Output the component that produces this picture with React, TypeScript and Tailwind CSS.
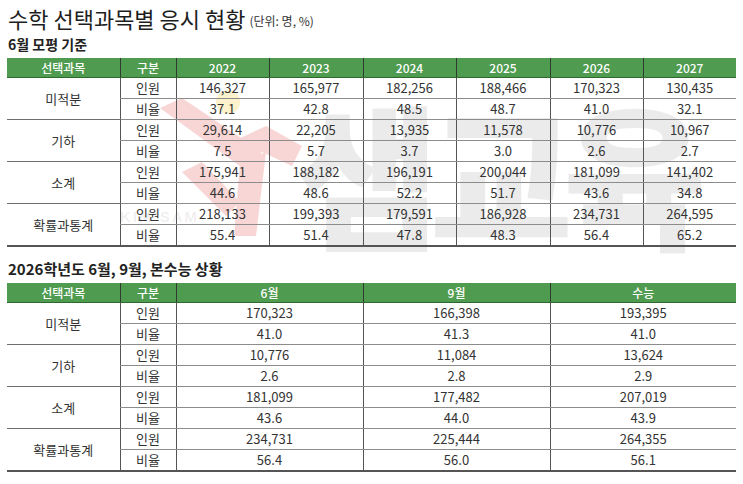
import React from "react";

type Group = { name: string; rows: { label: string; values: string[] }[] };

const t1Head = ["2022", "2023", "2024", "2025", "2026", "2027"];
const t1: Group[] = [
  { name: "미적분", rows: [
    { label: "인원", values: ["146,327", "165,977", "182,256", "188,466", "170,323", "130,435"] },
    { label: "비율", values: ["37.1", "42.8", "48.5", "48.7", "41.0", "32.1"] },
  ] },
  { name: "기하", rows: [
    { label: "인원", values: ["29,614", "22,205", "13,935", "11,578", "10,776", "10,967"] },
    { label: "비율", values: ["7.5", "5.7", "3.7", "3.0", "2.6", "2.7"] },
  ] },
  { name: "소계", rows: [
    { label: "인원", values: ["175,941", "188,182", "196,191", "200,044", "181,099", "141,402"] },
    { label: "비율", values: ["44.6", "48.6", "52.2", "51.7", "43.6", "34.8"] },
  ] },
  { name: "확률과통계", rows: [
    { label: "인원", values: ["218,133", "199,393", "179,591", "186,928", "234,731", "264,595"] },
    { label: "비율", values: ["55.4", "51.4", "47.8", "48.3", "56.4", "65.2"] },
  ] },
];

const t2Head = ["6월", "9월", "수능"];
const t2: Group[] = [
  { name: "미적분", rows: [
    { label: "인원", values: ["170,323", "166,398", "193,395"] },
    { label: "비율", values: ["41.0", "41.3", "41.0"] },
  ] },
  { name: "기하", rows: [
    { label: "인원", values: ["10,776", "11,084", "13,624"] },
    { label: "비율", values: ["2.6", "2.8", "2.9"] },
  ] },
  { name: "소계", rows: [
    { label: "인원", values: ["181,099", "177,482", "207,019"] },
    { label: "비율", values: ["43.6", "44.0", "43.9"] },
  ] },
  { name: "확률과통계", rows: [
    { label: "인원", values: ["234,731", "225,444", "264,355"] },
    { label: "비율", values: ["56.4", "56.0", "56.1"] },
  ] },
];

function DataTable({ head, groups, widths }: { head: string[]; groups: Group[]; widths: string[] }) {
  return (
    <table className="relative z-10 w-[729px] table-fixed border-collapse text-[13px] text-[#333]">
      <colgroup>
        <col className="w-[113px]" />
        <col className="w-[56px]" />
        {widths.map((w, i) => (
          <col key={i} style={{ width: w }} />
        ))}
      </colgroup>
      <thead>
        <tr className="h-[19px] bg-[#4f9b4f] text-white">
          <th className="border-b border-b-[#2e6a2e] p-0 text-[12px] font-medium leading-[19px]">선택과목</th>
          <th className="border-b border-l border-b-[#2e6a2e] border-l-[#2f3b2f] p-0 text-[12px] font-medium leading-[19px]">구분</th>
          {head.map((h) => (
            <th key={h} className="border-b border-l border-b-[#2e6a2e] border-l-[#2f3b2f] p-0 text-[12px] font-medium leading-[19px]">
              {h}
            </th>
          ))}
        </tr>
      </thead>
      <tbody>
        {groups.map((g, gi) =>
          g.rows.map((r, ri) => {
            const last = gi === groups.length - 1 && ri === g.rows.length - 1;
            const bottom = last ? "border-b-2 border-b-[#555]" : "border-b border-b-[#8c8c8c]";
            return (
              <tr key={gi + "-" + ri} className="h-[21px]">
                {ri === 0 && (
                  <td
                    rowSpan={g.rows.length}
                    className={
                      "p-0 text-center leading-[20px] " +
                      (gi === groups.length - 1 ? "border-b-2 border-b-[#555]" : "border-b border-b-[#6e6e6e]")
                    }
                  >
                    {g.name}
                  </td>
                )}
                <td className={"border-l border-l-[#555] p-0 text-center leading-[20px] " + bottom}>{r.label}</td>
                {r.values.map((v, vi) => (
                  <td key={vi} className={"border-l border-l-[#555] p-0 text-center leading-[20px] " + bottom}>
                    {v}
                  </td>
                ))}
              </tr>
            );
          })
        )}
      </tbody>
    </table>
  );
}

function Watermark() {
  return (
    <div className="pointer-events-none absolute left-0 top-0 z-0 h-[484px] w-[743px]">
      <svg className="absolute left-0 top-0" width="743" height="484" viewBox="0 0 743 484">
        <g opacity="0.2">
          <polygon points="160,108 182,98 262,152 248,172" fill="#e03a3a" />
          <polygon points="236,140 266,126 302,146 292,166" fill="#e03a3a" />
          <polygon points="240,162 266,152 256,236 234,236" fill="#e03a3a" />
          <polygon points="182,172 202,162 240,202 226,216" fill="#e03a3a" />
          <circle cx="228" cy="102" r="12" fill="#f2c200" />
        </g>
      </svg>
      <div className="absolute left-[120px] top-[206px] text-[15px] font-bold tracking-[2px] text-[#000]/[0.08] font-['Liberation_Sans',sans-serif]">
        KIM SAM
      </div>
      <div className="absolute left-[296px] top-[92px] whitespace-nowrap text-[156px] font-black leading-none tracking-[-10px] text-[#000]/[0.08] font-['Noto_Sans_CJK_KR',sans-serif]">
        샘교육
      </div>
    </div>
  );
}

export default function App() {
  return (
    <div className="relative h-[484px] w-[743px] overflow-hidden bg-white font-['Noto_Sans_CJK_KR','Noto_Sans',sans-serif] text-[#222]">
      <Watermark />
      <div className="relative z-10 pl-[7px]">
        <div className="flex items-end pl-[1px] pt-[5px]">
          <span className="text-[22px] leading-[26px] text-[#1e1e1e]">수학 선택과목별 응시 현황</span>
          <span className="ml-[4px] pb-[2px] text-[12px] leading-[16px] text-[#333]">(단위: 명, %)</span>
        </div>
        <div className="mt-[3px] pl-[1px] text-[14px] font-bold leading-[20px] text-[#222]">6월 모평 기준</div>
        <div className="mt-[4px]">
          <DataTable head={t1Head} groups={t1} widths={["93px", "94px", "93px", "94px", "93px", "93px"]} />
        </div>
        <div className="mt-[12px] pl-[1px] text-[15px] font-semibold leading-[20px] text-[#222]">
          2026학년도 6월, 9월, 본수능 상황
        </div>
        <div className="mt-[4px]">
          <DataTable head={t2Head} groups={t2} widths={["187px", "187px", "186px"]} />
        </div>
      </div>
    </div>
  );
}
